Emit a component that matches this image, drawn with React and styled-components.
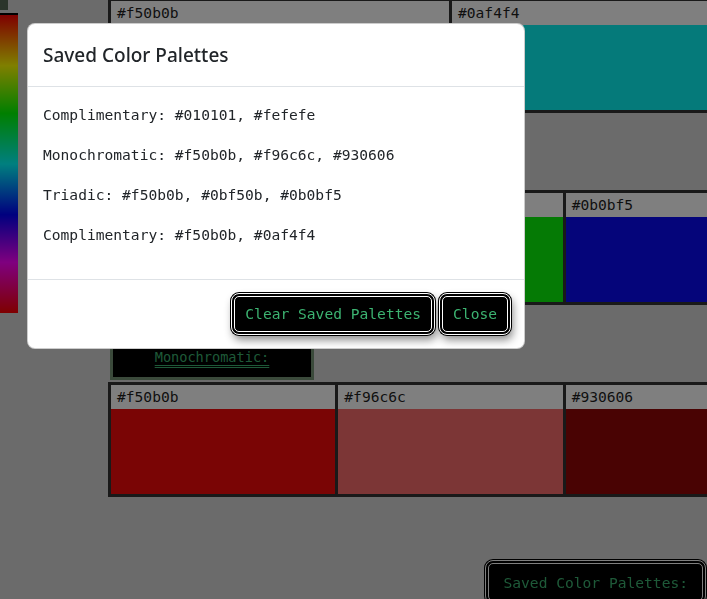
import React from 'react';
import styled, { createGlobalStyle } from 'styled-components';

const GlobalStyle = createGlobalStyle`
  html, body {
    margin: 0;
    padding: 0;
    overflow: hidden;
    background: #d6d6d6;
  }
  body {
    font-family: "DejaVu Sans Mono", "Liberation Mono", monospace;
  }
`;

const Page = styled.div`
  display: flex;
  align-items: flex-start;
  width: 100vw;
  height: 100vh;
`;

const Sidebar = styled.div`
  flex: 0 0 90px;
  display: flex;
  flex-direction: column;
`;

const StubButton = styled.div`
  width: 8px;
  height: 10px;
  background: #566a56;
  margin-bottom: 3px;
`;

const HueStrip = styled.div`
  width: 18px;
  height: 298px;
  border-top: 2px solid #000;
  background: linear-gradient(
    to bottom,
    #f00 0%,
    #ff0 17%,
    #0f0 33%,
    #0ff 50%,
    #00f 67%,
    #f0f 83%,
    #f00 100%
  );
`;

const Main = styled.div`
  flex: 0 0 685px;
  margin-left: 18px;
  display: flex;
  flex-direction: column;
  margin-top: -2px;
`;

const Row = styled.div`
  display: flex;
  border: 3px solid #333;
`;

const Card = styled.div`
  flex: 1;
  display: flex;
  flex-direction: column;
  & + & {
    border-left: 3px solid #333;
  }
`;

const Label = styled.div`
  height: 24px;
  line-height: 24px;
  padding-left: 6px;
  background: #fff;
  color: #1f1f1f;
  font-size: 14.6px;
`;

const Swatch = styled.div`
  height: 85px;
  background: ${p => p.$color};
`;

const TitleButton = styled.div`
  box-sizing: border-box;
  width: 204px;
  height: 50px;
  margin: 25px 0 2px 2px;
  border: 3px solid #769476;
  background: #000;
  display: flex;
  align-items: center;
  justify-content: center;
  padding-top: 4px;
  color: #3cb371;
  font-size: 13.6px;
  text-decoration: underline double;
  text-underline-offset: 3px;
`;

const FloatingButton = styled.div`
  position: fixed;
  right: 1px;
  bottom: -5px;
  box-sizing: border-box;
  height: 44px;
  padding: 0 14px;
  display: flex;
  align-items: center;
  background: #000;
  border: 4px double #fff;
  border-radius: 8px;
  box-shadow: 0 0 0 1px #000;
  color: #3cb371;
  font-size: 14.6px;
`;

const Backdrop = styled.div`
  position: fixed;
  inset: 0;
  background: rgba(0, 0, 0, 0.5);
`;

const Modal = styled.div`
  position: fixed;
  top: 23px;
  left: 27px;
  width: 498px;
  background: #fff;
  border-radius: 8px;
  border: 1px solid rgba(0, 0, 0, 0.2);
  box-sizing: border-box;
  overflow: hidden;
`;

const ModalHeader = styled.div`
  padding: 16px 15px;
  border-bottom: 1px solid #dee2e6;
`;

const ModalTitle = styled.h5`
  margin: 0;
  font-family: "Noto Sans", "Open Sans", sans-serif;
  font-size: 19px;
  font-weight: 500;
  line-height: 30px;
  color: #212529;
`;

const ModalBody = styled.div`
  padding: 16px 15px;
`;

const PaletteLine = styled.p`
  margin: 0 0 16px;
  font-size: 14.6px;
  line-height: 24px;
  color: #212529;
  white-space: pre;
`;

const ModalFooter = styled.div`
  display: flex;
  justify-content: flex-end;
  align-items: center;
  gap: 4px;
  padding: 13px 13px;
  border-top: 1px solid #dee2e6;
`;

const ActionButton = styled.button`
  box-sizing: border-box;
  height: 42px;
  padding: 0 10px;
  background: #000;
  border: 4px double #fff;
  border-radius: 8px;
  box-shadow: 0 0 0 1px #000, 2px 5px 8px rgba(0, 0, 0, 0.45);
  color: #3cb371;
  font-family: "DejaVu Sans Mono", "Liberation Mono", monospace;
  font-size: 14.6px;
  line-height: 24px;
  cursor: pointer;
`;

const rows = [
  { title: null, colors: ['#f50b0b', '#0af4f4'] },
  { title: 'Triadic:', colors: ['#f50b0b', '#0bf50b', '#0b0bf5'] },
  { title: 'Monochromatic:', colors: ['#f50b0b', '#f96c6c', '#930606'] },
];

const saved = [
  'Complimentary: #010101, #fefefe',
  'Monochromatic: #f50b0b, #f96c6c, #930606',
  'Triadic: #f50b0b, #0bf50b, #0b0bf5',
  'Complimentary: #f50b0b, #0af4f4',
];

const App = () => {
  return (
    <>
      <GlobalStyle />
      <Page>
        <Sidebar>
          <StubButton />
          <HueStrip />
        </Sidebar>
        <Main>
          {rows.map((row, i) => (
            <React.Fragment key={i}>
              {row.title && <TitleButton>{row.title}</TitleButton>}
              <Row>
                {row.colors.map(c => (
                  <Card key={c}>
                    <Label>{c}</Label>
                    <Swatch $color={c} />
                  </Card>
                ))}
              </Row>
            </React.Fragment>
          ))}
        </Main>
      </Page>
      <FloatingButton>Saved Color Palettes:</FloatingButton>
      <Backdrop />
      <Modal>
        <ModalHeader>
          <ModalTitle>Saved Color Palettes</ModalTitle>
        </ModalHeader>
        <ModalBody>
          {saved.map((line, i) => (
            <PaletteLine key={i}>{line}</PaletteLine>
          ))}
        </ModalBody>
        <ModalFooter>
          <ActionButton>Clear Saved Palettes</ActionButton>
          <ActionButton>Close</ActionButton>
        </ModalFooter>
      </Modal>
    </>
  );
};

export default App;
